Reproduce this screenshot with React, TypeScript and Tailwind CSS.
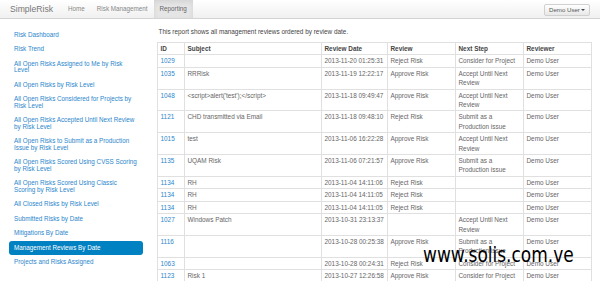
import React from 'react';

const reports = [
  'Risk Dashboard',
  'Risk Trend',
  'All Open Risks Assigned to Me by Risk Level',
  'All Open Risks by Risk Level',
  'All Open Risks Considered for Projects by Risk Level',
  'All Open Risks Accepted Until Next Review by Risk Level',
  'All Open Risks to Submit as a Production Issue by Risk Level',
  'All Open Risks Scored Using CVSS Scoring by Risk Level',
  'All Open Risks Scored Using Classic Scoring by Risk Level',
  'All Closed Risks by Risk Level',
  'Submitted Risks by Date',
  'Mitigations By Date',
  'Management Reviews By Date',
  'Projects and Risks Assigned',
];

const reviews = [
  ['1029', '', '2013-11-20 01:25:31', 'Reject Risk', 'Consider for Project'],
  ['1035', 'RRRisk', '2013-11-19 12:22:17', 'Approve Risk', 'Accept Until Next Review'],
  ['1048', "<script>alert('test');</script>", '2013-11-18 09:49:47', 'Approve Risk', 'Accept Until Next Review'],
  ['1121', 'CHD transmitted via Email', '2013-11-18 09:48:10', 'Reject Risk', 'Submit as a Production issue'],
  ['1015', 'test', '2013-11-06 16:22:28', 'Approve Risk', 'Accept Until Next Review'],
  ['1135', 'UQAM Risk', '2013-11-06 07:21:57', 'Approve Risk', 'Submit as a Production issue'],
  ['1134', 'RH', '2013-11-04 14:11:06', 'Reject Risk', ''],
  ['1134', 'RH', '2013-11-04 14:11:05', 'Reject Risk', ''],
  ['1134', 'RH', '2013-11-04 14:11:05', 'Reject Risk', ''],
  ['1027', 'Windows Patch', '2013-10-31 23:13:37', '', 'Accept Until Next Review'],
  ['1116', '', '2013-10-28 00:25:38', 'Approve Risk', 'Submit as a Production issue'],
  ['1063', '', '2013-10-28 00:24:31', 'Reject Risk', 'Consider for Project'],
  ['1123', 'Risk 1', '2013-10-27 12:26:58', 'Approve Risk', 'Consider for Project'],
];

function Navbar() {
  return (
    <div className="flex h-[19px] items-stretch border-b border-[#d4d4d4] bg-gradient-to-b from-white to-[#f0f0f0] text-[6.3px] text-[#888]">
      <div className="flex w-[62px] items-center pl-[10px] text-[8.6px] text-[#777]">SimpleRisk</div>
      <div className="flex items-center px-[6px]">Home</div>
      <div className="flex items-center px-[6px]">Risk Management</div>
      <div className="flex items-center bg-[#e5e5e5] px-[6px] text-[#666] shadow-[inset_0_2px_5px_rgba(0,0,0,0.08)]">Reporting</div>
      <div className="ml-auto mr-[10px] mt-[4px] flex h-[12px] w-[46px] items-center justify-center rounded-[2px] border border-[#d0d0d0] bg-gradient-to-b from-white to-[#e8e8e8] text-[6.1px] text-[#555]">
        Demo User
        <span className="ml-[1px] inline-block h-0 w-0 border-x-[2px] border-t-[2.5px] border-x-transparent border-t-[#444]" />
      </div>
    </div>
  );
}

function Sidebar() {
  return (
    <div className="w-[157px] shrink-0 pt-[8.75px]">
      <ul className="ml-[9px] w-[134px]">
        {reports.map((r) => {
          const active = r === 'Management Reviews By Date';
          return (
            <li
              key={r}
              className={
                'rounded-[3px] px-[5px] py-[4px] text-[6.3px] leading-[6.5px] ' +
                (active ? 'bg-[#0081c2] text-white' : 'text-[#2a86cc]')
              }
            >
              {r}
            </li>
          );
        })}
      </ul>
    </div>
  );
}

function ReviewTable() {
  const cell = 'border border-[#e0e0e0] px-[2.5px] py-[1px] text-left align-top';
  return (
    <table className="w-[434px] table-fixed border-collapse text-[6.4px] leading-[9.4px] text-[#666]">
      <colgroup>
        <col className="w-[27px]" />
        <col className="w-[137px]" />
        <col className="w-[66px]" />
        <col className="w-[68px]" />
        <col className="w-[68px]" />
        <col className="w-[68px]" />
      </colgroup>
      <thead>
        <tr className="font-bold text-[#444]">
          <th className={cell}>ID</th>
          <th className={cell}>Subject</th>
          <th className={cell}>Review Date</th>
          <th className={cell}>Review</th>
          <th className={cell}>Next Step</th>
          <th className={cell}>Reviewer</th>
        </tr>
      </thead>
      <tbody>
        {reviews.map((row, i) => (
          <tr key={i}>
            <td className={cell + ' text-[#2a86cc]'}>{row[0]}</td>
            <td className={cell}>{row[1]}</td>
            <td className={cell + ' whitespace-nowrap'}>{row[2]}</td>
            <td className={cell}>{row[3]}</td>
            <td className={cell}>{row[4]}</td>
            <td className={cell}>Demo User</td>
          </tr>
        ))}
      </tbody>
    </table>
  );
}

export default function App() {
  return (
    <div className="relative h-[281px] w-[600px] overflow-hidden bg-white font-['Liberation_Sans',Arial,sans-serif]">
      <Navbar />
      <div className="flex">
        <Sidebar />
        <div className="pt-[8px]">
          <p className="pl-[1.5px] text-[6.4px] leading-[9px] text-[#444]">
            This report shows all management reviews ordered by review date.
          </p>
          <div className="mt-[6px]">
            <ReviewTable />
          </div>
        </div>
      </div>
      <div className="absolute left-[423px] top-[247px] origin-bottom scale-y-[1.25] font-['DejaVu_Sans',sans-serif] text-[17px] leading-[20px] text-black">
        www.solis.com.ve
      </div>
    </div>
  );
}
